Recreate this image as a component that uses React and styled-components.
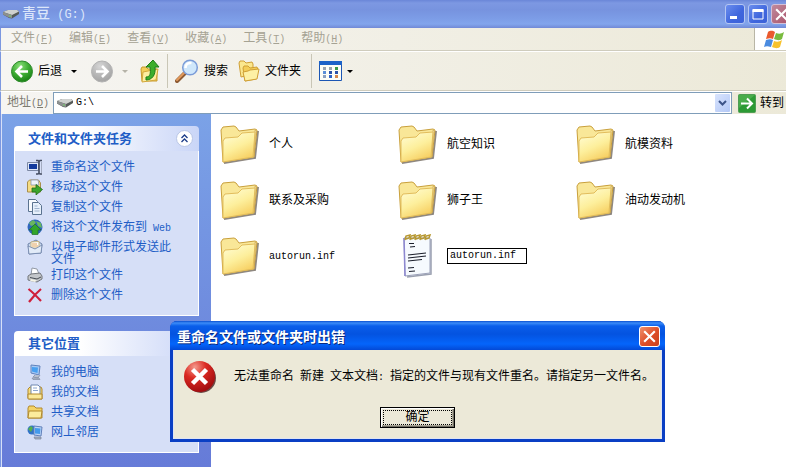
import React from 'react';
import styled, { createGlobalStyle, css } from 'styled-components';

const GlobalStyle = createGlobalStyle`
  * {
    box-sizing: border-box;
  }

  body {
    margin: 0;
    overflow: hidden;
    background: #fff;
    color: #000;
    font: 12px/16px "Liberation Sans", "Noto Sans CJK SC", sans-serif;
  }

  button,
  input {
    margin: 0;
    padding: 0;
    border: 0;
    background: none;
    color: inherit;
    font: inherit;
  }

  svg {
    display: block;
    flex: none;
  }
`;

/* half-width characters are half as wide as a chinese one */
const latinFont = css`
  font-family: "Liberation Mono", "Noto Sans CJK SC", monospace;
  font-size: ${props => (props.$large ? '12px' : '10px')};
`;

const Latin = styled.span`
  ${latinFont}
  white-space: pre;
`;

const Text = ({ children, large }) =>
  children.split(/([\x20-\x7e]+)/).map((part, i) =>
    i % 2 ? (
      <Latin key={i} $large={large}>
        {part}
      </Latin>
    ) : (
      part
    )
  );

/* the maximised window reaches a little past the screen edge */
const Window = styled.div`
  display: flex;
  flex-direction: column;
  width: calc(100% + 10px);
  min-height: 100vh;
`;

const TitleBar = styled.header`
  display: flex;
  align-items: center;
  gap: 3px;
  height: 28px;
  padding: 0 5px 0 3px;
  background: linear-gradient(#6a86d8 0, #7d98e2 3px, #7793df 10px, #7c9ce6 18px, #82a5ec 24px, #7189d6 28px);
`;

const Title = styled.h1`
  flex: 1;
  margin: 0;
  color: #dce6fa;
  font-size: 14px;
  font-weight: 500;
`;

const TitleButton = styled.button`
  display: grid;
  place-items: center;
  width: 20px;
  height: 20px;
  border: 1px solid ${props => (props.$close ? '#d3bfd6' : '#b4c6f3')};
  border-radius: 3px;
  background: ${props =>
    props.$close
      ? 'linear-gradient(135deg, #c08a9c, #a9526a)'
      : 'linear-gradient(135deg, #6b8eee, #3f66dd 60%, #3c62d8)'};
`;

const MenuBar = styled.nav`
  display: flex;
  align-items: stretch;
  height: 23px;
  border-bottom: 1px solid #cfccbd;
  border-left: 1px solid #7b97e0;
  background: linear-gradient(90deg, #f6f5f2, #ece9d8);
`;

const MenuItems = styled.div`
  display: flex;
  flex: 1;
  align-items: center;
  gap: 16px;
  padding-left: 10px;
`;

const MenuItem = styled.button`
  color: #a5a293;
`;

const Flag = styled.div`
  display: grid;
  place-items: center;
  width: 42px;
  padding-right: 4px;
  border-left: 1px solid #b9b6a6;
  background: #fff;
`;

const ToolBar = styled.div`
  display: flex;
  align-items: center;
  height: 40px;
  padding-left: 10px;
  border-top: 1px solid #fff;
  border-bottom: 1px solid #cfccbd;
  border-left: 1px solid #7b97e0;
  background: linear-gradient(90deg, #f6f5f2, #ece9d8);
`;

const ToolButton = styled.button`
  display: flex;
  align-items: center;
  gap: 5px;
  margin-right: ${props => props.$space || 0}px;
`;

const Separator = styled.span`
  width: 1px;
  height: 34px;
  margin-right: 7px;
  background: #c9c6b6;
`;

const AddressBar = styled.div`
  display: flex;
  align-items: center;
  height: 23px;
  padding-left: 6px;
  border-top: 1px solid #fff;
  border-left: 1px solid #7b97e0;
  background: linear-gradient(90deg, #f6f5f2, #ece9d8);
`;

const AddressLabel = styled.label`
  width: 46px;
  color: #7c7a70;
`;

const AddressBox = styled.div`
  display: flex;
  flex: 1;
  align-items: center;
  gap: 3px;
  height: 22px;
  padding: 0 1px 0 3px;
  border: 1px solid #7f9db9;
  background: #fff;
`;

const AddressInput = styled.input`
  ${latinFont}
  flex: 1;
  min-width: 0;
  outline: 0;
`;

const DropButton = styled.button`
  display: grid;
  place-items: center;
  width: 15px;
  height: 18px;
  border-radius: 1px;
  background: linear-gradient(135deg, #d9e4fd, #b3c8f6);
`;

const GoButton = styled.button`
  display: flex;
  align-items: center;
  gap: 4px;
  width: 58px;
  margin-left: 6px;
`;

const Main = styled.main`
  display: flex;
  flex: 1;
  border-left: 1px solid #7b97e0;
`;

const SideBar = styled.aside`
  display: flex;
  flex: none;
  flex-direction: column;
  gap: 15px;
  width: 210px;
  padding: 12px 12px 0;
  border-left: 1px solid #d7e0f8;
  background: linear-gradient(#7ba2e7, #667bd8);
`;

const PanelHeader = styled.div`
  display: flex;
  align-items: center;
  justify-content: space-between;
  height: 25px;
  padding: 0 6px 0 14px;
  border-radius: 4px 4px 0 0;
  background: linear-gradient(90deg, #fff 35%, #c9d5f7);
`;

const PanelTitle = styled.h2`
  margin: 0;
  color: #215dc6;
  font-size: 13px;
  font-weight: 700;
`;

const CollapseButton = styled.button`
  display: grid;
  place-items: center;
  width: 17px;
  height: 17px;
  border: 1px solid #b9c6e6;
  border-radius: 50%;
  background: #fff;
`;

const PanelBody = styled.ul`
  display: flex;
  flex-direction: column;
  gap: 4px;
  margin: 0;
  padding: 8px 20px 12px 12px;
  border: solid #fff;
  border-width: 0 1px 1px;
  background: #d6dff7;
  list-style: none;
`;

const Task = styled.li`
  display: flex;
  align-items: flex-start;
  gap: 8px;
`;

const TaskLink = styled.a`
  margin-bottom: -2px;
  padding-top: 2px;
  color: #215dc6;
  line-height: 12px;
  text-decoration: none;
`;

const Files = styled.section`
  display: grid;
  flex: 1;
  grid-template-columns: repeat(auto-fill, 178px);
  grid-auto-rows: 56px;
  align-content: start;
  padding: 2px 0 0 9px;
  background: #fff;
`;

const File = styled.div`
  display: flex;
  align-items: center;
  gap: 9px;
  text-align: left;
`;

const RenameInput = styled.input`
  ${latinFont}
  width: 80px;
  height: 16px;
  padding-left: 2px;
  border: 1px solid #000;
  outline: 0;
`;

const Dialog = styled.section`
  position: absolute;
  top: 321px;
  left: 170px;
  width: 495px;
  border: solid #0a3fc4;
  border-width: 0 3px 3px;
  border-radius: 7px 7px 0 0;
  background: #0a3fc4;
`;

const DialogTitleBar = styled.header`
  display: flex;
  align-items: center;
  justify-content: space-between;
  height: 29px;
  margin: 0 -3px;
  padding: 2px 5px 0 7px;
  border-radius: 7px 7px 0 0;
  background: linear-gradient(#0a4fd0 0, #3b8cf8 2px, #0a5eea 5px, #0453e0 13px, #0465fb 23px, #0349d6 29px);
`;

const DialogTitle = styled.h2`
  margin: 0;
  color: #fff;
  font-size: 14px;
  font-weight: 700;
  text-shadow: 1px 1px #0a2a80;
`;

const DialogClose = styled.button`
  display: grid;
  place-items: center;
  width: 21px;
  height: 21px;
  border: 1px solid #fff;
  border-radius: 3px;
  background: linear-gradient(135deg, #f0906c, #dd4d28 55%, #c9401c);
`;

const DialogBody = styled.div`
  display: flex;
  flex-direction: column;
  align-items: center;
  gap: 13px;
  padding: 10px 9px;
  border: solid #dfe4f3;
  border-width: 0 1px 1px;
  background: #ece9d8;
`;

const Message = styled.div`
  display: flex;
  align-items: center;
  align-self: stretch;
  gap: 17px;
  height: 34px;
  white-space: nowrap;
`;

const OkButton = styled.button`
  width: 75px;
  height: 21px;
  padding: 1px;
  border: 1px solid #000;
  background: #ece9d8;
  box-shadow: inset 1px 1px #fff, inset -1px -1px #716f64, inset -2px -2px #aca899;
`;

const FocusRing = styled.span`
  display: block;
  margin: 0 1px;
  border: 1px dotted #000;
  line-height: 13px;
`;

const DriveIcon = () => (
  <svg width="16" height="10" viewBox="0 0 16 10">
    <path d="M0 3l5-2h9l2 1.500v2.500L9 9.500 6 9 0 5.500z" fill="#555a58" />
    <path d="M0 3l5-2h9l2 1.500L9 6z" fill="#cfd1cf" />
    <path d="M0 3l9 3v3L6 8.500 0 5.500z" fill="#8c908f" />
    <path d="M6 7h2" stroke="#6fd060" />
  </svg>
);

const Caret = ({ color = '#000' }) => (
  <svg width="6" height="3" viewBox="0 0 6 3">
    <path d="M0 0h6L3 3z" fill={color} />
  </svg>
);

const Arrow = ({ disabled }) => (
  <svg width="22" height="23" viewBox="0 0 22 23">
    <defs>
      <radialGradient id={disabled ? 'orbOff' : 'orbOn'} cx=".4" cy=".25" r=".8">
        <stop offset="0" stopColor={disabled ? '#d6d6d6' : '#8be07a'} />
        <stop offset=".5" stopColor={disabled ? '#b9b9b9' : '#3fae35'} />
        <stop offset="1" stopColor={disabled ? '#a0a0a0' : '#157d12'} />
      </radialGradient>
    </defs>
    <circle
      cx="11"
      cy="11.500"
      r="10.500"
      fill={`url(#${disabled ? 'orbOff' : 'orbOn'})`}
      stroke={disabled ? '#b2b2b2' : '#2d8a2a'}
    />
    <path
      d={disabled ? 'M5 11.500h11M11 6l5.500 5.500L11 17' : 'M17 11.500H6M11 6l-5.500 5.500L11 17'}
      fill="none"
      stroke="#fff"
      strokeWidth="2.600"
    />
  </svg>
);

const UpIcon = () => (
  <svg width="20" height="24" viewBox="0 0 20 24">
    <path d="M1 10l1-2h4l2 2h9v12H2z" fill="#f3cf5a" stroke="#c79a2c" />
    <path d="M2 23l1-10 15-3-2 11z" fill="#fdeea0" stroke="#d3a73a" />
    <path d="M6 18c4 0 5-3 4-10H6l7-7 6 7h-4c1 8-3 13-9 13z" fill="#3cae2c" stroke="#1f7d18" />
  </svg>
);

const SearchIcon = () => (
  <svg width="24" height="24" viewBox="0 0 24 24">
    <path d="M2 22l8-8" stroke="#8d5a33" strokeWidth="4" strokeLinecap="round" />
    <path d="M2 21l8-8" stroke="#e39a5c" strokeWidth="2" strokeLinecap="round" />
    <circle cx="15" cy="8.500" r="7.300" fill="#cfe7fb" stroke="#7b9cd8" strokeWidth="1.500" />
    <path d="M10.500 9c0-4 3-5.500 6-5" fill="none" stroke="#fff" strokeWidth="2.500" />
  </svg>
);

const FoldersIcon = () => (
  <svg width="22" height="22" viewBox="0 0 22 22">
    <path d="M1 3l1-2h4l2 2 6-1 1 2v10L3 17z" fill="#fbe78e" stroke="#cf9f35" />
    <path d="M5 8l1-2h4l2 2 7-1 1 3-2 9-11 2z" fill="#f3cd58" stroke="#cf9f35" />
    <path d="M7 21L5 12l5-1 2-1 9-1-2 10z" fill="#fdf0a4" stroke="#cf9f35" />
  </svg>
);

const VIEW_DOTS = [
  ['#9aa4b0', '#9aa4b0', '#3b9a4a'],
  ['#5b8fd8', '#2c52a8', '#2c52a8'],
  ['#8aa0c0', '#2f62c8', '#d8884a']
];

const ViewsIcon = () => (
  <svg width="23" height="20" viewBox="0 0 23 20">
    <path d="M.5.500h22v19H.5z" fill="#fdfdf6" stroke="#1c56b4" />
    <path d="M0 0h23v4H0z" fill="#1c62c8" />
    {VIEW_DOTS.map((row, y) =>
      row.map((fill, x) => <path key={`${x}-${y}`} d={`M${4 + x * 6} ${6 + y * 4}h3v3h-3z`} fill={fill} />)
    )}
  </svg>
);

const GoIcon = () => (
  <svg width="18" height="19" viewBox="0 0 18 19">
    <rect x=".5" y=".5" width="17" height="18" rx="1" fill="#2c9a34" stroke="#4f9d54" />
    <path d="M1 1h16L1 14z" fill="#66bd62" opacity=".5" />
    <path d="M3 9.500h11M9 4.500l5 5-5 5" fill="none" stroke="#fff" strokeWidth="2" />
  </svg>
);

const WindowsIcon = () => (
  <svg width="20" height="19" viewBox="0 0 20 19">
    <path d="M4 2c3-2 5-1 7 0L9 9C7 8 5 8 2 9z" fill="#ea5a2e" />
    <path d="M12 3c3 1 5 1 8-1l-2 7c-3 2-5 1-8 0z" fill="#79bb3e" />
    <path d="M2 10c3-1 5-1 7 0l-2 7c-3-1-5-1-7 0z" fill="#4a8be0" />
    <path d="M10 11c3 1 5 1 8-1l-2 7c-3 2-5 1-8 0z" fill="#f8c22c" />
  </svg>
);

const Cross = ({ size }) => (
  <svg width={size} height={size} viewBox="0 0 11 11">
    <path d="M1 1l9 9M10 1l-9 9" stroke="#fff" strokeWidth="1.800" />
  </svg>
);

const FolderIcon = () => (
  <svg width="40" height="40" viewBox="0 0 40 40">
    <defs>
      <linearGradient id="folder" x1=".2" y1="0" x2=".7" y2="1">
        <stop offset="0" stopColor="#fffcd2" />
        <stop offset=".5" stopColor="#fdef9c" />
        <stop offset="1" stopColor="#f6cb5a" />
      </linearGradient>
    </defs>
    <path d="M4 39l31-5 3-27" fill="none" stroke="#5f564a" strokeWidth="2" opacity=".7" />
    <path d="M1 6l2-3 11-1 2 1 3 4 16-2 2 1-3 27L3 38z" fill="#f9e798" stroke="#c9a03c" />
    <path d="M35 6l1 1-2 25z" fill="#fffad2" stroke="#c9a14a" strokeWidth=".6" />
    <path d="M3 38V17l2-3 13-1 4-4 13-1-2 25z" fill="url(#folder)" stroke="#e2bd5c" />
  </svg>
);

const NotepadIcon = () => (
  <svg width="40" height="44" viewBox="0 0 40 44">
    <path d="M9 43l24-3V5" fill="none" stroke="#9aa0b0" strokeWidth="1.500" />
    <path d="M6 4h26v35L7 42z" fill="#f6fafe" stroke="#9aa0b8" />
    <path d="M6 4l1 38" stroke="#8c87d0" strokeWidth="1.500" />
    {[7, 12, 17, 22, 27].map(x => (
      <path key={x} d={`M${x} 6l1-4 4-1-1 3-3 1`} fill="none" stroke="#b79832" strokeWidth="1.500" />
    ))}
    <path
      d="M11 9.500h5M12 13l5-.5M10 21l18-2M10 24l18-2M10 27l14-1.500M10 34l6-.5M11 37.500l6-.5"
      stroke="#1b1f2c"
      strokeWidth="1.200"
    />
  </svg>
);

const ErrorIcon = () => (
  <svg width="34" height="34" viewBox="0 0 34 34">
    <defs>
      <radialGradient id="error" cx=".35" cy=".2" r=".8">
        <stop offset="0" stopColor="#f49a8c" />
        <stop offset=".45" stopColor="#db2a22" />
        <stop offset="1" stopColor="#a30d10" />
      </radialGradient>
    </defs>
    <circle cx="18" cy="18" r="15" fill="#4a2020" opacity=".8" />
    <circle cx="16.500" cy="16.500" r="15.500" fill="url(#error)" />
    <path d="M9.500 9.500l14 14M23.500 9.500l-14 14" stroke="#fff" strokeWidth="4.500" />
  </svg>
);

/* 16px drawings used in front of the side bar links */
const TASK_DRAWINGS = {
  rename: (
    <>
      <path d="M.5 3.500h11v8H.5z" fill="#dfe8f8" stroke="#7c88a4" />
      <path d="M2 5h8v5H2z" fill="#123a9c" />
      <path d="M9 1.500h2l1 1 1-1h2M9 15h2l1-1 1 1h2M12 2v12" stroke="#444c60" strokeWidth="1.600" fill="none" />
      <path d="M14.500 3v11" stroke="#a3abc0" />
    </>
  ),
  move: (
    <>
      <path d="M.5 13V3l2-2h9l2 3v9z" fill="#f5dc83" stroke="#a98f4c" />
      <path d="M4 1h7l1 5H4z" fill="#eef3fb" stroke="#8b98b0" strokeWidth=".8" />
      <path d="M5 9h4V5.500l6.500 5L9 16v-3H5z" fill="#3ba52d" stroke="#216d18" strokeWidth=".8" />
    </>
  ),
  copy: (
    <>
      <path d="M1.500.500h7l2 2v10h-9z" fill="#f7fafe" stroke="#5b7390" />
      <path d="M5.500 3.500h6l3 3v9h-9z" fill="#e7f0fb" stroke="#5b7390" />
      <path d="M7.500 7h3M7.500 9.500h5M7.500 12h5" stroke="#9eb2cc" />
    </>
  ),
  publish: (
    <>
      <circle cx="8" cy="8" r="7.500" fill="#2f66bd" />
      <path d="M2 4l4-3 3 2-2 3-3 1zM9 2l5 2 1 5-4-2z" fill="#69b75f" />
      <path d="M8 5l6 6h-3v4.500H5V11H2z" fill="#32a52a" stroke="#1e6b1c" strokeWidth=".6" />
    </>
  ),
  mail: (
    <>
      <path d="M1 5l8-4 6 4-1 9-12 1z" fill="#c9d8ee" stroke="#6f84a9" />
      <path d="M4 3l8-.5V9H4z" fill="#fff" stroke="#c9b37a" />
      <path d="M5 5h5M5 7h6" stroke="#e0a35a" />
      <path d="M1 7l7 3 7-4-1 8-12 1z" fill="#e2ebf8" stroke="#6f84a9" strokeWidth=".8" />
    </>
  ),
  print: (
    <>
      <path d="M4 8l1-7 5 1 2 5z" fill="#fff" stroke="#9299a5" />
      <path d="M1 9l3-2 9-1 2 3v3l-5 3-9-2z" fill="#c3c6ca" stroke="#72767c" />
      <path d="M3 10.500l7 1.500 4-2" fill="none" stroke="#454a52" />
      <path d="M4 12l6 1.500-2 1.500-5-1z" fill="#f4f4e8" />
    </>
  ),
  remove: <path d="M1.500 2q5 4 12.500 12M14 2Q8 7 2 15" fill="none" stroke="#cf1f3a" strokeWidth="2.200" />,
  computer: (
    <>
      <path d="M4 1l9 1-1 9-8-2z" fill="#a7c9f4" stroke="#6182bc" />
      <path d="M5 3l6 .5-.5 5.500L5 7.500z" fill="#48a0f0" />
      <path d="M8 11l-2 2 5 1 2-3M5 14h7l1 1.500H6z" fill="#b9c1cf" stroke="#7f8aa0" strokeWidth=".7" />
    </>
  ),
  documents: (
    <>
      <path d="M1 14V5l2-2h11l1 2v10H2z" fill="#f6dc7c" stroke="#b1892e" />
      <path d="M4 1h7l2 2v8H4z" fill="#fff" stroke="#6f87b0" />
      <path d="M6 4h4M6 6.500h5" stroke="#8ba6d0" />
      <path d="M1 10h14v5H1z" fill="#fbe99a" stroke="#b1892e" />
    </>
  ),
  shared: (
    <>
      <path d="M1 14V4l1-2h5l2 2h6v10z" fill="#f4d468" stroke="#b1892e" />
      <path d="M1 14l1-7h13l-1 7z" fill="#fcec9c" stroke="#b1892e" />
    </>
  ),
  network: (
    <>
      <circle cx="5" cy="6" r="4.500" fill="#3173c7" />
      <path d="M1 5l3-3 2 2-2 4z" fill="#55b04c" />
      <path d="M7 2l8 1-1 9-7-1z" fill="#bcd5f5" stroke="#5f7fba" />
      <path d="M8 4l5.500.5-.5 5.500-5-.5z" fill="#449aec" />
      <path d="M7 13h7v2H8z" fill="#aab3c3" stroke="#76819a" strokeWidth=".7" />
    </>
  )
};

const TaskIcon = ({ name }) => (
  <svg width="16" height="16" viewBox="0 0 16 16">
    {TASK_DRAWINGS[name]}
  </svg>
);

const MENUS = [
  ['文件', 'F'],
  ['编辑', 'E'],
  ['查看', 'V'],
  ['收藏', 'A'],
  ['工具', 'T'],
  ['帮助', 'H']
];

const FILE_TASKS = [
  ['rename', '重命名这个文件'],
  ['move', '移动这个文件'],
  ['copy', '复制这个文件'],
  ['publish', '将这个文件发布到 Web'],
  ['mail', '以电子邮件形式发送此文件'],
  ['print', '打印这个文件'],
  ['remove', '删除这个文件']
];

const PLACES = [
  ['computer', '我的电脑'],
  ['documents', '我的文档'],
  ['shared', '共享文档'],
  ['network', '网上邻居']
];

const FOLDERS = ['个人', '航空知识', '航模资料', '联系及采购', '狮子王', '油动发动机', 'autorun.inf'];

const AccessKey = ({ letter }) => (
  <Latin>
    (<u>{letter}</u>)
  </Latin>
);

const Panel = ({ title, items }) => (
  <section>
    <PanelHeader>
      <PanelTitle>{title}</PanelTitle>
      <CollapseButton aria-label="折叠">
        <svg width="7" height="9" viewBox="0 0 7 9">
          <path d="M.5 4l3-3 3 3M.5 8l3-3 3 3" fill="none" stroke="#1c3c88" strokeWidth="1.300" />
        </svg>
      </CollapseButton>
    </PanelHeader>
    <PanelBody>
      {items.map(([icon, label]) => (
        <Task key={icon}>
          <TaskIcon name={icon} />
          <TaskLink href="#">
            <Text>{label}</Text>
          </TaskLink>
        </Task>
      ))}
    </PanelBody>
  </section>
);

const ErrorDialog = () => (
  <Dialog role="alertdialog" aria-labelledby="error-title">
    <DialogTitleBar>
      <DialogTitle id="error-title">重命名文件或文件夹时出错</DialogTitle>
      <DialogClose aria-label="关闭">
        <Cross size={13} />
      </DialogClose>
    </DialogTitleBar>
    <DialogBody>
      <Message>
        <ErrorIcon />
        <span>
          <Text>无法重命名 新建 文本文档: 指定的文件与现有文件重名。请指定另一文件名。</Text>
        </span>
      </Message>
      <OkButton>
        <FocusRing>确定</FocusRing>
      </OkButton>
    </DialogBody>
  </Dialog>
);

const App = () => (
  <>
    <GlobalStyle />
    <Window>
      <TitleBar>
        <DriveIcon />
        <Title>
          <Text large>青豆 (G:)</Text>
        </Title>
        <TitleButton aria-label="最小化">
          <svg width="12" height="12" viewBox="0 0 12 12">
            <path d="M1 8h7v3H1z" fill="#fff" />
          </svg>
        </TitleButton>
        <TitleButton aria-label="最大化">
          <svg width="12" height="12" viewBox="0 0 12 12">
            <path d="M1 2h10v9H1z" fill="none" stroke="#fff" />
            <path d="M.5 1h11v3H.5z" fill="#fff" />
          </svg>
        </TitleButton>
        <TitleButton $close aria-label="关闭">
          <Cross size={13} />
        </TitleButton>
      </TitleBar>

      <MenuBar>
        <MenuItems>
          {MENUS.map(([label, letter]) => (
            <MenuItem key={letter}>
              {label}
              <AccessKey letter={letter} />
            </MenuItem>
          ))}
        </MenuItems>
        <Flag>
          <WindowsIcon />
        </Flag>
      </MenuBar>

      <ToolBar>
        <ToolButton $space={9}>
          <Arrow />
          后退
        </ToolButton>
        <ToolButton $space={14} aria-label="后退历史">
          <Caret />
        </ToolButton>
        <ToolButton $space={9} aria-label="前进" disabled>
          <Arrow disabled />
        </ToolButton>
        <ToolButton $space={12} aria-label="前进历史" disabled>
          <Caret color="#b5b3a8" />
        </ToolButton>
        <ToolButton $space={7} aria-label="向上">
          <UpIcon />
        </ToolButton>
        <Separator />
        <ToolButton $space={10}>
          <SearchIcon />
          搜索
        </ToolButton>
        <ToolButton $space={10}>
          <FoldersIcon />
          文件夹
        </ToolButton>
        <Separator />
        <ToolButton $space={2} aria-label="查看">
          <ViewsIcon />
          <Caret />
        </ToolButton>
      </ToolBar>

      <AddressBar>
        <AddressLabel htmlFor="address">
          地址
          <AccessKey letter="D" />
        </AddressLabel>
        <AddressBox>
          <DriveIcon />
          <AddressInput id="address" defaultValue="G:\" />
          <DropButton aria-label="展开">
            <svg width="9" height="6" viewBox="0 0 9 6">
              <path d="M1 1l3.500 3.500L8 1" fill="none" stroke="#3c5488" strokeWidth="2" />
            </svg>
          </DropButton>
        </AddressBox>
        <GoButton>
          <GoIcon />
          转到
        </GoButton>
      </AddressBar>

      <Main>
        <SideBar>
          <Panel title="文件和文件夹任务" items={FILE_TASKS} />
          <Panel title="其它位置" items={PLACES} />
        </SideBar>
        <Files>
          {FOLDERS.map(name => (
            <File as="button" key={name}>
              <FolderIcon />
              <span>
                <Text>{name}</Text>
              </span>
            </File>
          ))}
          <File>
            <NotepadIcon />
            <RenameInput aria-label="文件名" defaultValue="autorun.inf" />
          </File>
        </Files>
      </Main>
    </Window>
    <ErrorDialog />
  </>
);

export default App;
